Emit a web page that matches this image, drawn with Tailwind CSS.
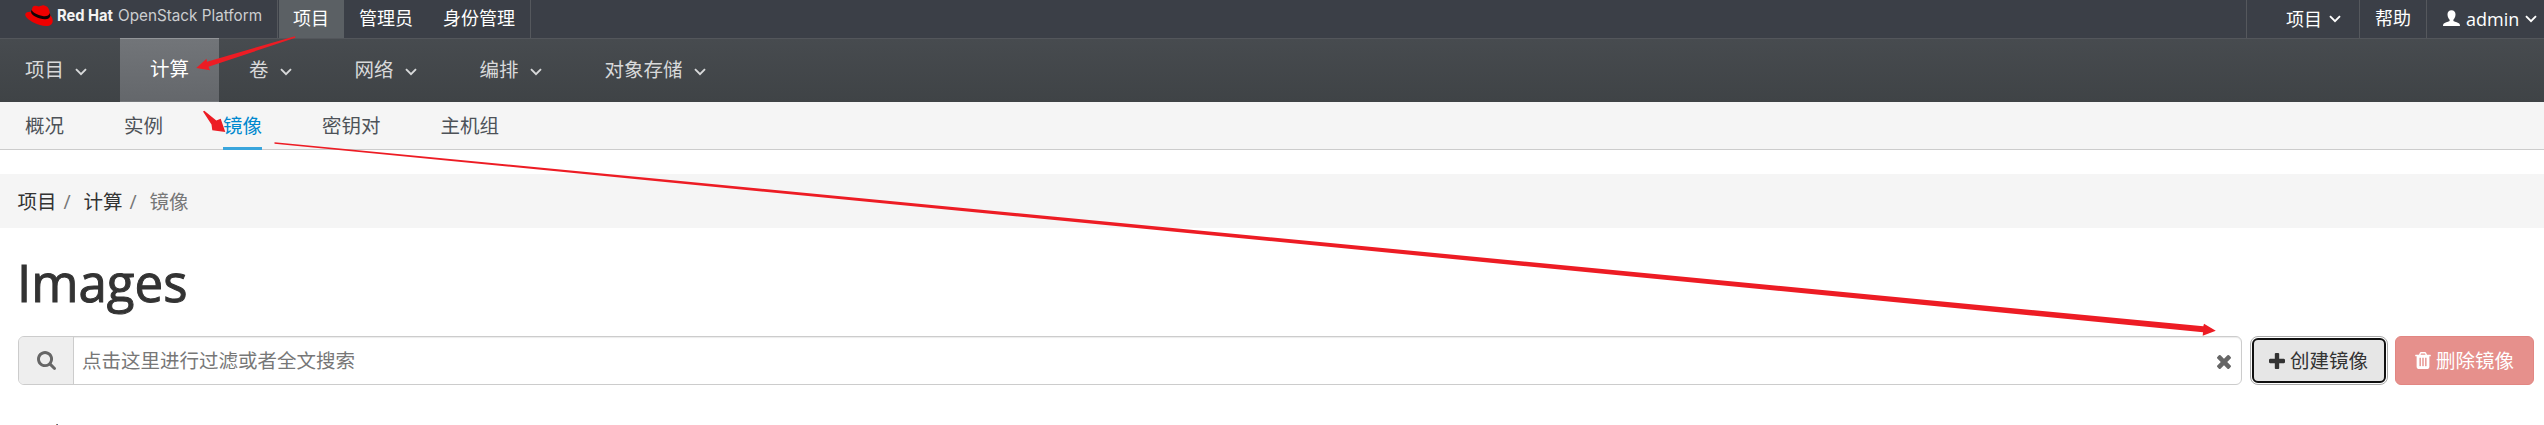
<!DOCTYPE html>
<html lang="zh-CN">
<head>
<meta charset="utf-8">
<title>Images</title>
<script src="https://cdn.jsdelivr.net/npm/@tailwindcss/browser@4"></script>
</head>
<body class="relative h-[425px] w-[2544px] overflow-hidden bg-white font-['Open_Sans','Noto_Sans_CJK_SC',sans-serif] text-[19.5px] text-[#333]">
<svg class="hidden">
  <symbol id="chev" viewBox="0 0 12 8"><path d="M1 1.2 L6 6.2 L11 1.2" fill="none" stroke="currentColor" stroke-width="1.9"/></symbol>
</svg>

<header class="flex h-[39px] border-b border-[#53565b] bg-[#3b3f47] text-lg leading-[37px] text-white">
  <div class="w-[277px] shrink-0">
    <svg class="h-[38px] w-[277px]" viewBox="0 0 277 38">
      <path d="M32.8 6.8 C34.5 5 37 6.3 38.8 6.4 C41 6 42 5 43.5 5.3 C47 6 48.6 7.5 49.4 11 L50.3 15.5 C53 18 53.6 22 51.5 24.2 C48.5 27.4 40 26 34 22.8 C28.5 20 24.6 16.5 25.3 14 C25.8 12.3 28.3 11.6 31 11.8 Z" fill="#e00"/>
      <path d="M31 11.8 C31 15.6 39 19.3 45 19.2 C48.5 19.1 50.2 17.7 50.3 15.5 L49.7 13 C49 16 46 16.6 42.5 16 C37.5 15.1 32.5 12.6 31.6 9.8 Z" fill="#120304"/>
      <text x="57" y="21.3" font-family="Inter" font-size="15.5" font-weight="700" fill="#f4f4f4" textLength="56" lengthAdjust="spacingAndGlyphs">Red Hat</text>
      <text x="118" y="21.3" font-family="Inter" font-size="15.5" font-weight="400" fill="#ccced0" textLength="144" lengthAdjust="spacingAndGlyphs">OpenStack Platform</text>
    </svg>
  </div>
  <nav class="flex border-x border-[#55585d] pl-px">
    <a class="bg-[#5b6064] pr-[15px] pl-[14px]">项目</a>
    <a class="px-[15px]">管理员</a>
    <a class="px-[15px]">身份管理</a>
  </nav>
  <div class="ml-auto flex">
    <a class="flex w-[113px] items-center gap-[7px] border-l border-[#55585d] pl-[39px]">项目<svg class="h-2 w-3"><use href="#chev"/></svg></a>
    <a class="w-[67px] border-l border-[#55585d] pl-[15px]">帮助</a>
    <a class="flex w-[118px] items-center border-l border-[#55585d] pl-4">
      <svg class="mr-1.5 -mt-0.5 h-[17px] w-[17px]" viewBox="0 0 17 17"><path d="M8.5 0.3 C11 .3 12.6 2 12.5 4.6 C12.4 7 11.5 8.7 10.4 9.8 V11.1 C12.5 12 15.3 12.8 16.2 13.6 C16.8 14.2 16.9 15 17 16 H0 C0 15 .2 14.2 .8 13.6 C1.7 12.8 4.5 12 6.6 11.1 V9.8 C5.5 8.7 4.6 7 4.5 4.6 C4.4 2 6 .3 8.5 .3Z" fill="#fff"/></svg>admin<svg class="ml-1.5 h-2 w-3"><use href="#chev"/></svg>
    </a>
  </div>
</header>

<nav class="flex h-[63px] bg-linear-to-b from-[#474b4f] to-[#3f4346] leading-[60px] text-[#d8d9da]">
  <a class="flex h-[61px] w-[120px] items-center gap-[11px] pl-[25px]">项目<svg class="mt-1 h-2 w-3"><use href="#chev"/></svg></a>
  <a class="-mt-px w-[99px] border-y border-t-[#929498] border-b-[#75787c] bg-linear-to-b from-[#727579] to-[#64676b] pl-[30px] text-white">计算</a>
  <a class="flex h-[61px] w-[105.5px] items-center gap-[11px] pl-[30px]">卷<svg class="mt-1 h-2 w-3"><use href="#chev"/></svg></a>
  <a class="flex h-[61px] w-[125px] items-center gap-[11px] pl-[30px]">网络<svg class="mt-1 h-2 w-3"><use href="#chev"/></svg></a>
  <a class="flex h-[61px] w-[125px] items-center gap-[11px] pl-[30px]">编排<svg class="mt-1 h-2 w-3"><use href="#chev"/></svg></a>
  <a class="flex h-[61px] items-center gap-[11px] pl-[30px]">对象存储<svg class="mt-1 h-2 w-3"><use href="#chev"/></svg></a>
</nav>

<nav class="flex h-12 gap-[60px] border-b border-[#ccc] bg-[#f5f5f5] pl-[25px] leading-[47px] text-[#4d5258]">
  <a>概况</a><a>实例</a><a class="h-12 border-b-[3px] border-[#39a5dc] text-[#0088ce]">镜像</a><a>密钥对</a><a>主机组</a>
</nav>

<div class="mt-6 flex h-[54px] bg-[#f5f5f5] pl-[17.5px] leading-[55px]">
  <span>项目</span><span class="w-[27px] pl-[7px] text-[#777]">/</span><span>计算</span><span class="w-[27px] pl-[7px] text-[#777]">/</span><span class="text-[#777]">镜像</span>
</div>

<h1 class="mt-[20px] h-[88px] pl-[17px] text-[51px] font-normal leading-[68px] [-webkit-text-stroke:1px_#333]">Images</h1>

<div class="flex h-[49px] pl-[18px]">
  <div class="flex w-[2224px] overflow-hidden rounded-md border border-[#ccc] bg-white shadow-[inset_0_1px_1px_rgba(0,0,0,0.08)]">
    <div class="flex w-[55px] items-center justify-center border-r border-[#ccc] bg-[#eee]">
      <svg class="h-[19px] w-[19px] fill-[#666]" viewBox="64 128 1664 1664"><path d="M1216 832q0-185-131.5-316.5t-316.5-131.5-316.5 131.5-131.5 316.5 131.5 316.5 316.5 131.5 316.5-131.5 131.5-316.5zm512 832q0 52-38 90t-90 38q-54 0-90-38l-343-342q-179 124-399 124-143 0-273.5-55.5t-225-150-150-225-55.5-273.5 55.5-273.5 150-225 225-150 273.5-55.5 273.5 55.5 225 150 150 225 55.5 273.5q0 220-124 399l343 343q37 37 37 90z"/></svg>
    </div>
    <span class="pl-2 leading-[48px] text-[#777]">点击这里进行过滤或者全文搜索</span>
    <svg class="mt-[18px] mr-[10px] ml-auto h-[14px] w-[14px] fill-[#666]" viewBox="302 366 1188 1188"><path d="M1490 1322q0 40-28 68l-136 136q-28 28-68 28t-68-28l-294-294-294 294q-28 28-68 28t-68-28l-136-136q-28-28-28-68t28-68l294-294-294-294q-28-28-28-68t28-68l136-136q28-28 68-28t68 28l294 294 294-294q28-28 68-28t68 28l136 136q28 28 28 68t-28 68l-294 294 294 294q28 28 28 68z"/></svg>
  </div>
  <a class="ml-2 w-[138px] rounded-lg border border-[#aaa] p-px">
    <span class="flex h-[45px] items-center rounded-md border-2 border-[#101010] bg-[#e6e6e6] pl-[15px] leading-[41px] text-[#333]">
      <svg class="mr-[5px] h-4 w-4 shrink-0 fill-[#333]" viewBox="192 128 1408 1408"><path d="M1600 736v192q0 40-28 68t-68 28h-416v416q0 40-28 68t-68 28h-192q-40 0-68-28t-28-68v-416h-416q-40 0-68-28t-28-68v-192q0-40 28-68t68-28h416v-416q0-40 28-68t68-28h192q40 0 68 28t28 68v416h416q40 0 68 28t28 68z"/></svg>创建镜像</span>
  </a>
  <a class="ml-[7px] flex w-[139px] items-center rounded-md border border-[#e28682] bg-[#e6908c] pl-[19px] leading-[47px] text-white">
    <svg class="mr-[5px] h-[17px] w-4 shrink-0 fill-white" viewBox="192 128 1408 1536"><path d="M704 1376v-704q0-14-9-23t-23-9h-64q-14 0-23 9t-9 23v704q0 14 9 23t23 9h64q14 0 23-9t9-23zm256 0v-704q0-14-9-23t-23-9h-64q-14 0-23 9t-9 23v704q0 14 9 23t23 9h64q14 0 23-9t9-23zm256 0v-704q0-14-9-23t-23-9h-64q-14 0-23 9t-9 23v704q0 14 9 23t23 9h64q14 0 23-9t9-23zm-544-992h448l-48-117q-7-9-17-11h-317q-10 2-17 11zm928 32v64q0 14-9 23t-23 9h-96v948q0 83-47 143.5t-113 60.5h-832q-66 0-113-58.5t-47-141.5v-952h-96q-14 0-23-9t-9-23v-64q0-14 9-23t23-9h309l70-167q15-37 54-63t79-26h320q40 0 79 26t54 63l70 167h309q14 0 23 9t9 23z"/></svg>删除镜像</a>
</div>
<div class="mt-[39px] ml-14 h-px w-0.5 bg-linear-to-r from-[#d99a2b] to-[#23459b]"></div>

<svg class="pointer-events-none absolute inset-0 h-[425px] w-[2544px] fill-[#ed1c24]" viewBox="0 0 2544 425">
  <path d="M295 36.2 L207 61.7 L206.5 58.8 L196.3 68 L210 70.2 L208.5 66.8 L295.3 37.8 Z"/>
  <path d="M203 111.5 L211.5 124.5 L212.3 130.2 L225.3 132 L220.7 118.7 L216.3 120.5 L204.3 110.8 Z"/>
  <path d="M274.5 142.3 L2203.3 326.3 L2204 323.8 L2215.8 330.7 L2202.7 335.7 L2203 332.3 L274.5 143.8 Z"/>
</svg>
</body>
</html>
